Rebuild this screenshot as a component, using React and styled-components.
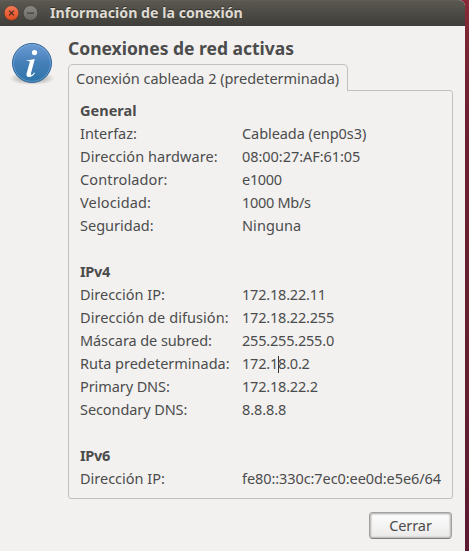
import React from 'react';
import styled, { createGlobalStyle } from 'styled-components';

const GlobalStyle = createGlobalStyle`
  * { box-sizing: border-box; }
  body {
    margin: 0;
    background: #3f0f2b;
    color: #4c4c4c;
    font: 14.5px "Noto Sans", sans-serif;
    overflow: hidden;
  }
`;

const Desktop = styled.div`
  width: 469px;
  height: 551px;
  background: linear-gradient(#8c2a37 0, #792633 40px, #6b1f30 120px, #66202e 300px, #5c1a31 551px);
`;

const Dialog = styled.main`
  width: 465px;
  height: 551px;
  display: flex;
  flex-direction: column;
  background: #f2f1f0;
  border-top-right-radius: 6px;
  overflow: hidden;
`;

const TitleBar = styled.header`
  height: 26px;
  flex: none;
  display: flex;
  align-items: center;
  gap: 3px;
  padding: 0 0 2px 3px;
  background: linear-gradient(#5a5850, #3e3d39);
  border-top: 1px solid #5f5d55;
`;

const Title = styled.h1`
  margin: 0 0 0 9px;
  font-size: 14.2px;
  line-height: 23px;
  font-weight: 700;
  color: #dfdbd2;
  text-shadow: 0 -1px 0 #33322e;
  white-space: nowrap;
`;

const Content = styled.div`
  display: flex;
  padding: 12px 12px 0 8px;
`;

const IconSlot = styled.div`
  width: 48px;
  height: 48px;
  margin-right: 12px;
  flex: none;
`;

const Main = styled.section`
  width: 385px;
`;

const Heading = styled.h2`
  margin: 0;
  height: 26px;
  font-size: 17.5px;
  line-height: 20px;
  font-weight: 700;
  letter-spacing: -0.01px;
  white-space: nowrap;
`;

const Tab = styled.div`
  position: relative;
  width: 280px;
  height: 27px;
  margin-bottom: -1px;
  padding-left: 7px;
  line-height: 26px;
  letter-spacing: -0.025px;
  white-space: nowrap;
  background: #f2f1f0;
  border: 1px solid #c2c1bf;
  border-bottom: 0;
  border-radius: 5px 5px 0 0;
`;

const Panel = styled.div`
  height: 409px;
  padding: 8px 0 0 11px;
  border: 1px solid #c2c1bf;
  border-radius: 0 3px 3px 3px;
`;

const Group = styled.section`
  margin-bottom: 23px;
`;

const GroupTitle = styled.h3`
  margin: 0;
  font-size: inherit;
  line-height: 23px;
  font-weight: 700;
  letter-spacing: ${(p) => p.$track}px;
`;

const Row = styled.div`
  display: grid;
  grid-template-columns: 162px 1fr;
  line-height: 23px;
`;

const Cell = styled.span`
  letter-spacing: ${(p) => p.$track}px;
  white-space: nowrap;
`;

const Caret = styled.i`
  display: inline-block;
  width: 1px;
  height: 17px;
  margin-right: -1px;
  vertical-align: -4px;
  background: #333;
`;

const Footer = styled.footer`
  display: flex;
  justify-content: flex-end;
  padding: 13px 13px 0 0;
`;

const CloseButton = styled.button`
  width: 83px;
  height: 27px;
  padding: 0;
  border: 1px solid #a09f9d;
  border-bottom-color: #7f7e7c;
  border-radius: 4px;
  background: linear-gradient(#fdfdfd, #ebeae9);
  box-shadow: inset 0 0 0 1px #c3c2c0, inset 0 0 1px 2px #dddcdb;
  color: inherit;
  font: inherit;
  line-height: 23px;
  letter-spacing: -0.1px;
`;

const groups = [
  {
    title: 'General',
    track: 0.02,
    rows: [
      ['Interfaz:', -0.027, 'Cableada (enp0s3)', -0.07],
      ['Dirección hardware:', 0.067, '08:00:27:AF:61:05', -0.05],
      ['Controlador:', 0.131, 'e1000', -0.3],
      ['Velocidad:', 0.148, '1000 Mb/s', -0.3],
      ['Seguridad:', 0.009, 'Ninguna', 0.08],
    ],
  },
  {
    title: 'IPv4',
    track: -0.3,
    rows: [
      ['Dirección IP:', -0.013, '172.18.22.11', -0.2],
      ['Dirección de difusión:', 0.07, '172.18.22.255', -0.2],
      ['Máscara de subred:', -0.083, '255.255.255.0', -0.2],
      ['Ruta predeterminada:', -0.01, '172.18.0.2', -0.2, 5],
      ['Primary DNS:', -0.09, '172.18.22.2', -0.2],
      ['Secondary DNS:', -0.085, '8.8.8.8', -0.1],
    ],
  },
  {
    title: 'IPv6',
    track: -0.3,
    rows: [['Dirección IP:', -0.013, 'fe80::330c:7ec0:ee0d:e5e6/64', -0.083]],
  },
];

function WindowButton({ close }) {
  const id = close ? 'closeFill' : 'minFill';
  return (
    <svg width="16" height="18" viewBox="0 0 16 18">
      <defs>
        <linearGradient id={id} x1="0" y1="0" x2="0" y2="1">
          <stop offset="0" stopColor={close ? '#f47b58' : '#8b8983'} />
          <stop offset="1" stopColor={close ? '#e04c1e' : '#6b6963'} />
        </linearGradient>
      </defs>
      <circle cx="8.5" cy="9" r="7.4" fill={`url(#${id})`} stroke="#35342f" strokeWidth="0.6" />
      {close ? (
        <path d="M6.1 6.6l4.8 4.8M10.9 6.6l-4.8 4.8" stroke="#4a2a20" strokeWidth="1.2" />
      ) : (
        <path d="M5 9.1h7" stroke="#3a3935" strokeWidth="1.1" />
      )}
    </svg>
  );
}

function InfoIcon() {
  return (
    <svg width="48" height="48" viewBox="0 0 48 48">
      <defs>
        <linearGradient id="ball" x1="0" y1="0" x2="0" y2="1">
          <stop offset="0" stopColor="#6c9bd4" />
          <stop offset="0.5" stopColor="#457fb8" />
          <stop offset="1" stopColor="#2c74a8" />
        </linearGradient>
        <radialGradient id="shade">
          <stop offset="0.5" stopColor="#000" stopOpacity="0.22" />
          <stop offset="1" stopColor="#000" stopOpacity="0" />
        </radialGradient>
      </defs>
      <ellipse cx="24" cy="40.5" rx="23" ry="6.5" fill="url(#shade)" />
      <circle cx="24" cy="25" r="19.5" fill="url(#ball)" stroke="#2f6699" />
      <circle cx="24" cy="25" r="18.4" fill="none" stroke="#8fb9e2" strokeOpacity="0.45" />
      <circle cx="26.5" cy="14.6" r="2.6" fill="#fff" />
      <path
        d="M18.7 22.4l8.1-1.5-3.8 14.4c-.3 1.3.1 1.8.8 1.5.8-.3 1.7-1.4 2.4-2.4l.9.7c-1.7 2.5-3.8 4-6 4-2.2 0-3.1-1.3-2.5-3.5l3-10.8c.4-1.4 0-1.7-1.1-1.7h-1.9z"
        fill="#fff"
      />
    </svg>
  );
}

function Value({ text, track, caretAt }) {
  if (!caretAt) return <Cell $track={track}>{text}</Cell>;
  return (
    <Cell $track={track}>
      {text.slice(0, caretAt)}
      <Caret />
      {text.slice(caretAt)}
    </Cell>
  );
}

export default function App() {
  return (
    <Desktop>
      <GlobalStyle />
      <Dialog>
        <TitleBar>
          <WindowButton close />
          <WindowButton />
          <Title>Información de la conexión</Title>
        </TitleBar>
        <Content>
          <IconSlot>
            <InfoIcon />
          </IconSlot>
          <Main>
            <Heading>Conexiones de red activas</Heading>
            <Tab>Conexión cableada 2 (predeterminada)</Tab>
            <Panel>
              {groups.map((g) => (
                <Group key={g.title}>
                  <GroupTitle $track={g.track}>{g.title}</GroupTitle>
                  {g.rows.map(([label, labelTrack, value, valueTrack, caretAt]) => (
                    <Row key={label}>
                      <Cell $track={labelTrack}>{label}</Cell>
                      <Value text={value} track={valueTrack} caretAt={caretAt} />
                    </Row>
                  ))}
                </Group>
              ))}
            </Panel>
          </Main>
        </Content>
        <Footer>
          <CloseButton>Cerrar</CloseButton>
        </Footer>
      </Dialog>
    </Desktop>
  );
}
